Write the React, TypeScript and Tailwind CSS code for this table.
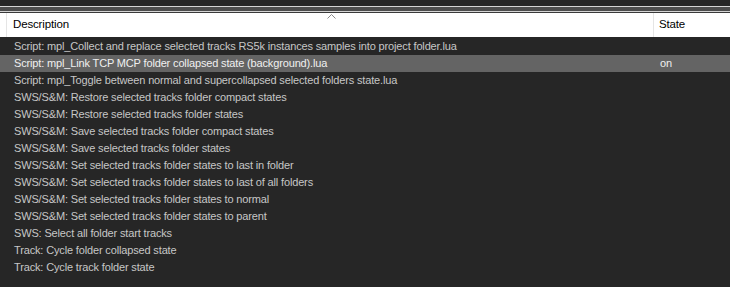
const rows: { text: string; state?: string; selected?: boolean }[] = [
  { text: "Script: mpl_Collect and replace selected tracks RS5k instances samples into project folder.lua" },
  { text: "Script: mpl_Link TCP MCP folder collapsed state (background).lua", state: "on", selected: true },
  { text: "Script: mpl_Toggle between normal and supercollapsed selected folders state.lua" },
  { text: "SWS/S&M: Restore selected tracks folder compact states" },
  { text: "SWS/S&M: Restore selected tracks folder states" },
  { text: "SWS/S&M: Save selected tracks folder compact states" },
  { text: "SWS/S&M: Save selected tracks folder states" },
  { text: "SWS/S&M: Set selected tracks folder states to last in folder" },
  { text: "SWS/S&M: Set selected tracks folder states to last of all folders" },
  { text: "SWS/S&M: Set selected tracks folder states to normal" },
  { text: "SWS/S&M: Set selected tracks folder states to parent" },
  { text: "SWS: Select all folder start tracks" },
  { text: "Track: Cycle folder collapsed state" },
  { text: "Track: Cycle track folder state" },
];

export default function App() {
  return (
    <div
      className="w-[730px] h-[287px] bg-[#262626] overflow-hidden text-[11px] tracking-[-0.15px]"
      style={{ fontFamily: '"Liberation Sans", Arial, sans-serif' }}
    >
      {/* top frame lines */}
      <div className="h-[6px] bg-[#262626]" />
      <div className="h-px bg-[#d4d4d4]" />
      <div className="h-[4px] bg-[#4d4d4d]" />
      <div className="h-px bg-[#d4d4d4]" />
      <div className="h-px bg-[#3a3a3a]" />

      {/* header */}
      <div className="relative flex h-[24px] bg-white text-black text-[11.5px]">
        <div className="w-[7px] border-r border-[#e5e5e5]" />
        <div className="flex w-[647px] items-center border-r border-[#e5e5e5] pl-[6px]">Description</div>
        <div className="flex flex-1 items-center pl-[5px]">State</div>
        <svg className="absolute left-[327px] top-[1px]" width="9" height="5" viewBox="0 0 9 5">
          <path d="M0.5 4.5 L4.5 0.5 L8.5 4.5" fill="none" stroke="#8a8a8a" strokeWidth="1" />
        </svg>
      </div>
      <div className="h-px bg-[#262626]" />

      {/* rows */}
      <div className="flex flex-col">
        {rows.map((r) => (
          <div
            key={r.text}
            className={`flex h-[17px] items-center ${r.selected ? "bg-[#646464] text-[#f0f0f0]" : "text-[#c6c6c6]"}`}
          >
            <div className="w-[654px] pl-[14px] whitespace-nowrap">{r.text}</div>
            <div className="pl-[6px]">{r.state}</div>
          </div>
        ))}
      </div>
    </div>
  );
}
